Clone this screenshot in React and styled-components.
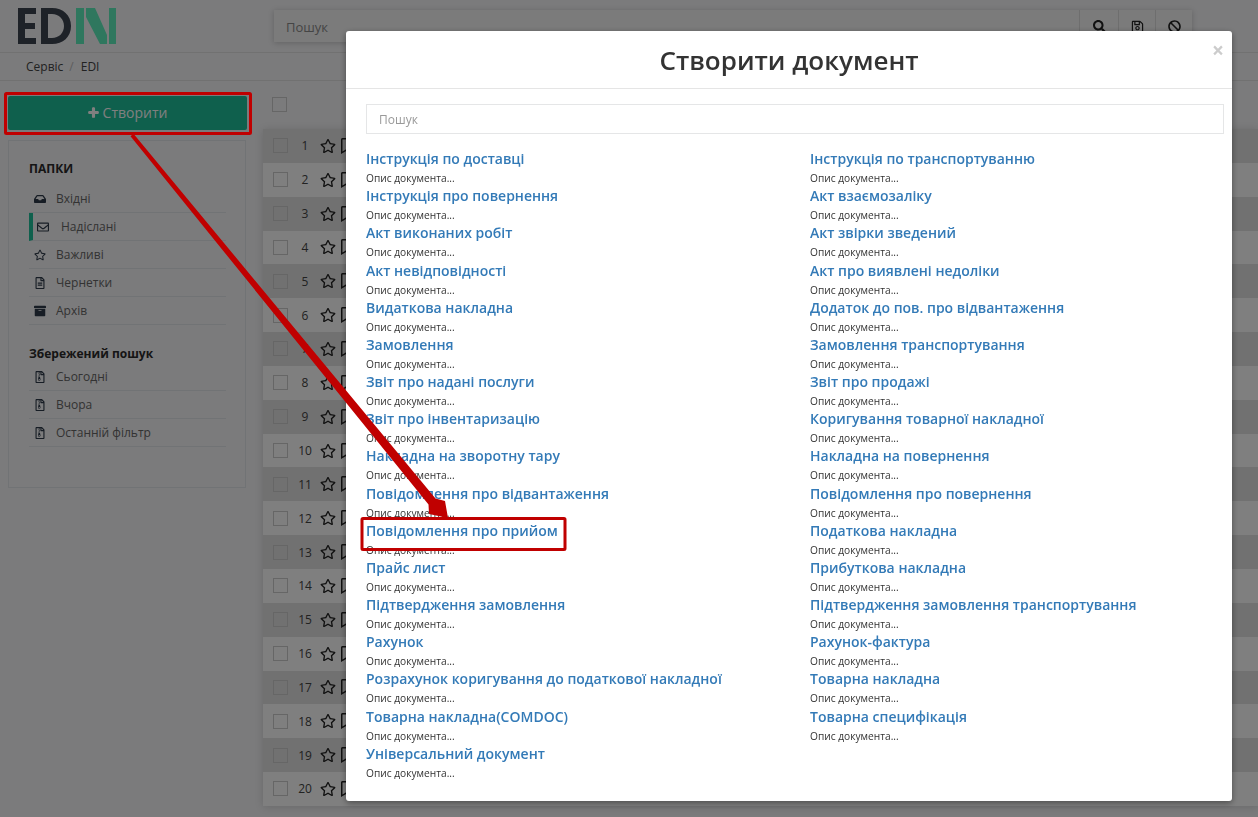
import styled, { createGlobalStyle } from 'styled-components'
import {
  FaArchive,
  FaBan,
  FaInbox,
  FaPlus,
  FaRegBookmark,
  FaRegEnvelope,
  FaRegFileAlt,
  FaRegFileArchive,
  FaRegSave,
  FaRegStar,
  FaSearch,
} from 'react-icons/fa'

const GlobalStyle = createGlobalStyle`
  * { box-sizing: border-box; }
  html, body { margin: 0; padding: 0; height: 100%; overflow: hidden; }
  body {
    background: #f6f6f8;
    font-family: "Open Sans", "Liberation Sans", sans-serif;
    font-size: 12px;
    color: #333;
  }
`

const Page = styled.div`
  width: 1258px;
  height: 817px;
  overflow: hidden;
`

const Header = styled.header`
  height: 53px;
  display: flex;
  align-items: flex-start;
  padding: 10px 66px 0 18px;
  border-bottom: 1px solid #e2e2e2;
`

const Logo = styled.svg`
  width: 99px;
  height: 36px;
  margin: -2px 157px 0 0;
  flex: none;
`

const SearchBar = styled.div`
  flex: 1;
  display: flex;
  height: 32px;
  box-shadow: 0 1px 6px rgba(0, 0, 0, 0.2);
`

const SearchInput = styled.div`
  flex: 1;
  background: #f7f7f7;
  padding: 8px 12px;
  font-size: 13px;
  line-height: 18px;
  color: #8a8a8a;
`

const SearchButton = styled.div`
  width: ${props => props.$width}px;
  background: #f7f7f7;
  border-left: 1px solid #ddd;
  display: flex;
  align-items: center;
  justify-content: center;
  font-size: 13px;
  color: #222;
`

const Breadcrumb = styled.div`
  height: 28px;
  padding-left: 26px;
  display: flex;
  align-items: center;
  border-bottom: 1px solid #e2e2e2;
  color: #4a4a4a;
`

const Crumb = styled.span`
  color: ${props => (props.$sep ? '#bbb' : '#444')};
  margin-right: ${props => (props.$sep ? 7 : 6)}px;
`

const Content = styled.div`
  display: flex;
  padding: 15px 0 0 8px;
`

const Sidebar = styled.aside`
  width: 239px;
  flex: none;
  margin-right: 16px;
`

const CreateButton = styled.div`
  height: 34px;
  background: #1ec09a;
  border-radius: 2px;
  display: flex;
  align-items: center;
  justify-content: center;
  gap: 4px;
  color: #fff;
  font-size: 14px;
  margin-bottom: 10px;
  padding-bottom: 1px;
  svg {
    font-size: 11px;
    stroke: currentColor;
    stroke-width: 50px;
  }
`

const Panel = styled.div`
  height: 348px;
  border: 1px solid #e2e6ea;
  padding: 19px 19px 0 20px;
  width: 238px;
`

const PanelTitle = styled.div`
  font-weight: 700;
  font-size: 12px;
  line-height: 17px;
  color: #2a2a2a;
  margin-top: ${props => props.$top || 0}px;
`

const FolderList = styled.div`
  margin-top: ${props => props.$top || 0}px;
`

const Folder = styled.div`
  height: 28px;
  display: flex;
  align-items: center;
  border-bottom: 1px solid #e2e6ea;
  padding-left: ${props => (props.$active ? 4 : 5)}px;
  border-left: ${props => (props.$active ? '4px solid #1ec09a' : 'none')};
  color: #666;
  svg {
    width: 12px;
    height: 12px;
    margin-right: ${props => (props.$active ? 12 : 10)}px;
    color: #2f3b4a;
    flex: none;
  }
`

const Table = styled.div`
  flex: 1;
`

const TableHead = styled.div`
  height: 33px;
  padding: 1px 0 0 9px;
`

const Check = styled.span`
  display: block;
  width: 15px;
  height: 15px;
  border: 1px solid #ccc;
  flex: none;
`

const Rows = styled.div`
  box-shadow: 0 1px 8px rgba(0, 0, 0, 0.15);
`

const Row = styled.div`
  height: 33.85px;
  display: flex;
  align-items: center;
  padding-left: 10px;
  background: ${props => (props.$odd ? '#e2e2e2' : '#ffffff')};
`

const RowNumber = styled.span`
  width: 26px;
  text-align: center;
  margin: 0 2px 0 4px;
  font-size: 12px;
  color: #444;
`

const RowIcon = styled.span`
  display: flex;
  font-size: 16px;
  color: #222;
  margin-right: 3px;
`

const Backdrop = styled.div`
  position: fixed;
  inset: 0;
  background: rgba(0, 0, 0, 0.5);
`

const Modal = styled.div`
  position: fixed;
  left: 346px;
  top: 31px;
  width: 886px;
  height: 770px;
  background: #fff;
  border-radius: 3px;
  box-shadow: 0 2px 6px rgba(0, 0, 0, 0.4);
`

const ModalHeader = styled.div`
  height: 58px;
  border-bottom: 1px solid #e5e5e5;
  display: flex;
  align-items: center;
  justify-content: center;
`

const ModalTitle = styled.h2`
  margin: 0;
  font-size: 26px;
  font-weight: 600;
  color: #333;
`

const Close = styled.span`
  position: absolute;
  right: 8px;
  top: 7px;
  font-size: 21px;
  line-height: 24px;
  font-weight: 700;
  color: #ccc;
`

const ModalBody = styled.div`
  padding: 15px 8px 0 20px;
`

const ModalSearch = styled.div`
  height: 30px;
  border: 1px solid #e5e6e7;
  padding: 0 12px;
  display: flex;
  align-items: center;
  color: #999;
  margin-bottom: 15.16px;
`

const DocGrid = styled.div`
  display: grid;
  grid-template-columns: 444px 1fr;
  grid-auto-rows: 37.16px;
`

const DocTitle = styled.div`
  font-size: 14px;
  font-weight: 600;
  line-height: 20px;
  color: #337ab7;
`

const DocText = styled.div`
  font-size: 10.2px;
  line-height: 17px;
  margin-top: 1px;
  color: #333;
`

const Annotations = styled.svg`
  position: fixed;
  inset: 0;
  width: 1258px;
  height: 817px;
  pointer-events: none;
`

const folders = [
  { label: 'Вхідні', icon: <FaInbox /> },
  { label: 'Надіслані', icon: <FaRegEnvelope />, active: true },
  { label: 'Важливі', icon: <FaRegStar /> },
  { label: 'Чернетки', icon: <FaRegFileAlt /> },
  { label: 'Архів', icon: <FaArchive /> },
]

const searches = ['Сьогодні', 'Вчора', 'Останній фільтр']

const docs = [
  'Інструкція по доставці',
  'Інструкція по транспортуванню',
  'Інструкція про повернення',
  'Акт взаємозаліку',
  'Акт виконаних робіт',
  'Акт звірки зведений',
  'Акт невідповідності',
  'Акт про виявлені недоліки',
  'Видаткова накладна',
  'Додаток до пов. про відвантаження',
  'Замовлення',
  'Замовлення транспортування',
  'Звіт про надані послуги',
  'Звіт про продажі',
  'Звіт про інвентаризацію',
  'Коригування товарної накладної',
  'Накладна на зворотну тару',
  'Накладна на повернення',
  'Повідомлення про відвантаження',
  'Повідомлення про повернення',
  'Повідомлення про прийом',
  'Податкова накладна',
  'Прайс лист',
  'Прибуткова накладна',
  'Підтвердження замовлення',
  'Підтвердження замовлення транспортування',
  'Рахунок',
  'Рахунок-фактура',
  'Розрахунок коригування до податкової накладної',
  'Товарна накладна',
  'Товарна накладна(COMDOC)',
  'Товарна специфікація',
  'Універсальний документ',
]

const rows = Array.from({ length: 20 }, (_, i) => i + 1)

const App = () => {
  return (
    <Page>
      <GlobalStyle />
      <Header>
        <Logo viewBox="0 0 99 36">
          <path fill="#3c4450" d="M0 0h18v6H7v9h10v6H7v9h11v6H0z" />
          <path
            fill="#3c4450"
            fillRule="evenodd"
            d="M23 0h11c11 0 19 7 19 18s-8 18-19 18H23zM30 6v24h4c7 0 12-5 12-12S41 6 34 6z"
          />
          <path fill="#5eeebd" d="M58 0h8v36h-8zM68 0h9l12 27v9h-7L68 9zM91 0h7v36h-7z" />
        </Logo>
        <SearchBar>
          <SearchInput>Пошук</SearchInput>
          <SearchButton $width={39}><FaSearch /></SearchButton>
          <SearchButton $width={37}><FaRegSave /></SearchButton>
          <SearchButton $width={37}><FaBan /></SearchButton>
        </SearchBar>
      </Header>
      <Breadcrumb>
        <Crumb>Сервіс</Crumb>
        <Crumb $sep>/</Crumb>
        <Crumb>EDI</Crumb>
      </Breadcrumb>
      <Content>
        <Sidebar>
          <CreateButton><FaPlus />Створити</CreateButton>
          <Panel>
            <PanelTitle>ПАПКИ</PanelTitle>
            <FolderList $top={8}>
              {folders.map(folder => (
                <Folder key={folder.label} $active={folder.active}>
                  {folder.icon}
                  {folder.label}
                </Folder>
              ))}
            </FolderList>
            <PanelTitle $top={20}>Збережений пошук</PanelTitle>
            <FolderList $top={1}>
              {searches.map(label => (
                <Folder key={label}>
                  <FaRegFileArchive />
                  {label}
                </Folder>
              ))}
            </FolderList>
          </Panel>
        </Sidebar>
        <Table>
          <TableHead><Check /></TableHead>
          <Rows>
            {rows.map(n => (
              <Row key={n} $odd={n % 2 === 1}>
                <Check />
                <RowNumber>{n}</RowNumber>
                <RowIcon><FaRegStar /></RowIcon>
                <RowIcon><FaRegBookmark /></RowIcon>
              </Row>
            ))}
          </Rows>
        </Table>
      </Content>
      <Backdrop />
      <Modal>
        <ModalHeader>
          <ModalTitle>Створити документ</ModalTitle>
          <Close>×</Close>
        </ModalHeader>
        <ModalBody>
          <ModalSearch>Пошук</ModalSearch>
          <DocGrid>
            {docs.map(title => (
              <div key={title}>
                <DocTitle>{title}</DocTitle>
                <DocText>Опис документа...</DocText>
              </div>
            ))}
          </DocGrid>
        </ModalBody>
      </Modal>
      <Annotations viewBox="0 0 1258 817">
        <rect x="5.5" y="93.5" width="245" height="40" rx="1" fill="none" stroke="#c00000" strokeWidth="3" />
        <rect x="362" y="518.5" width="203" height="31" rx="1" fill="none" stroke="#c00000" strokeWidth="3" />
        <path d="M133.5 133.7L435.5 498.5L445 501L448 518L429 514L428.5 504.5L130.5 136.3z" fill="#c00000" />
      </Annotations>
    </Page>
  )
}

export default App
